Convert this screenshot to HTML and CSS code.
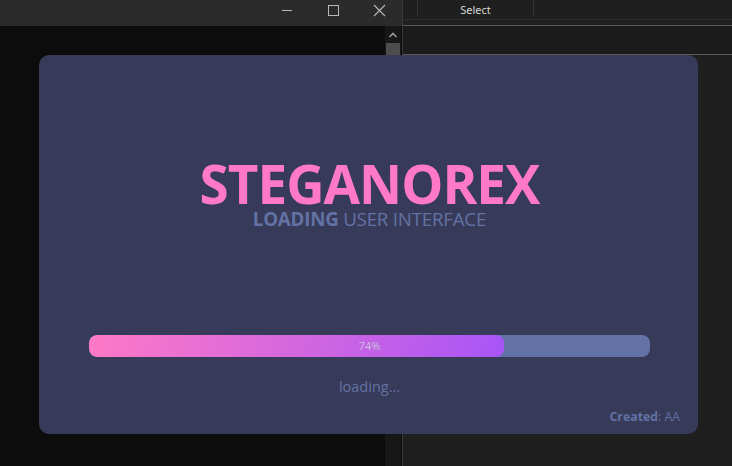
FILE: index.html
```html
<!DOCTYPE html>
<html>
<head>
<meta charset="utf-8">
<link rel="stylesheet" href="styles.css">
</head>
<body>
<div class="desk">
  <div class="win-left">
    <div class="titlebar">
      <svg class="ctl" width="46" height="26" viewBox="0 0 46 26"><path d="M18 10.5h10" stroke="#b8b8b8" stroke-width="1"/></svg>
      <svg class="ctl" width="46" height="26" viewBox="0 0 46 26"><rect x="18.5" y="5.5" width="10" height="10" fill="none" stroke="#b8b8b8" stroke-width="1"/></svg>
      <svg class="ctl" width="46" height="26" viewBox="0 0 46 26"><path d="M18 5l11 11M29 5L18 16" stroke="#b8b8b8" stroke-width="1.1"/></svg>
    </div>
    <div class="left-body">
      <div class="console"></div>
      <div class="scrollbar">
        <svg class="arrow" width="16" height="14" viewBox="0 0 16 14"><path d="M4.5 9l3.5-3.5 3.5 3.5" fill="none" stroke="#9a9a9a" stroke-width="1.6"/></svg>
        <div class="thumb"></div>
      </div>
    </div>
  </div>
  <div class="divider"></div>
  <div class="win-right">
    <div class="toolbar">
      <div class="tb-cell tb-a"></div>
      <div class="tb-cell tb-b">Select</div>
      <div class="tb-rest"></div>
    </div>
    <div class="strip"></div>
    <div class="right-body"></div>
  </div>
</div>

<div class="card">
  <div class="hero">
    <h1 class="title">STEGANOREX</h1>
    <div class="subtitle"><b>LOADING</b> USER INTERFACE</div>
  </div>
  <div class="progress">
    <div class="fill" style="width:74%"></div>
    <span class="pct">74%</span>
  </div>
  <div class="status">loading...</div>
  <div class="credit"><b>Created</b>: AA</div>
</div>
</body>
</html>
```
FILE: styles.css
```css
html, body {
  margin: 0;
  padding: 0;
  width: 732px;
  height: 466px;
  overflow: hidden;
  background: #0c0c0c;
  font-family: "Open Sans", "Noto Sans", sans-serif;
}
.desk {
  display: flex;
  width: 732px;
  height: 466px;
}
.win-left {
  width: 402px;
  display: flex;
  flex-direction: column;
}
.titlebar {
  height: 26px;
  background: #2b2b2b;
  display: flex;
  justify-content: flex-end;
  padding-right: 0;
}
.ctl { display: block; }
.left-body {
  flex: 1;
  display: flex;
}
.console {
  flex: 1;
  background: #0c0c0c;
}
.scrollbar {
  width: 16px;
  margin-right: 1px;
  background: #171717;
  display: flex;
  flex-direction: column;
  padding-top: 2px;
}
.arrow { display: block; }
.thumb {
  margin: 1px 1px 0 1px;
  height: 60px;
  background: #4d4d4d;
}
.divider {
  width: 1px;
  background: #3a3a3a;
}
.win-right {
  flex: 1;
  display: flex;
  flex-direction: column;
  background: #202020;
}
.toolbar {
  height: 19px;
  display: flex;
  background: #1f1f1f;
  border-bottom: 1px solid #2c2c2c;
}
.tb-cell {
  height: 16px;
  border-right: 1px solid #333;
}
.tb-a { width: 14px; }
.tb-b {
  width: 115px;
  color: #d8d8d8;
  font-size: 11px;
  line-height: 20px;
  text-align: center;
  font-family: "Noto Sans", sans-serif;
}
.tb-rest { flex: 1; }
.strip {
  height: 28px;
  background: #1b1b1b;
  border-top: 1px solid #5a5a5a;
  border-bottom: 1px solid #5a5a5a;
  margin-top: 5px;
}
.right-body {
  flex: 1;
  background: #1f1f1f;
}
.card {
  position: absolute;
  left: 39px;
  top: 55px;
  width: 659px;
  height: 379px;
  background: #383a59;
  border-radius: 10px;
  display: flex;
  flex-direction: column;
  align-items: center;
  box-sizing: border-box;
  padding: 0 48px 0 50px;
}
.hero {
  margin-top: 103px;
  text-align: center;
}
.title {
  margin: 0;
  font-size: 53px;
  line-height: 52px;
  font-weight: 700;
  color: #ff79c6;
  letter-spacing: -1px;
}
.subtitle {
  margin-top: 0;
  font-size: 18.7px;
  line-height: 18px;
  color: #6272a4;
  letter-spacing: -0.2px;
}
.subtitle b { font-weight: 700; }
.progress {
  margin-top: 107px;
  position: relative;
  width: 561px;
  height: 22px;
  background: #6272a4;
  border-radius: 8px;
  overflow: hidden;
}
.fill {
  height: 100%;
  border-radius: 8px;
  background: linear-gradient(100deg, #ff79c6 0%, #a855f7 100%);
}
.pct {
  position: absolute;
  left: 0;
  right: 0;
  top: 0;
  text-align: center;
  font-size: 11px;
  line-height: 22px;
  color: #c8c2dc;
}
.status {
  margin-top: 20px;
  font-size: 14.5px;
  line-height: 20px;
  color: #6272a4;
}
.credit {
  align-self: flex-end;
  margin-top: 11px;
  margin-right: -30px;
  font-size: 12.3px;
  line-height: 17px;
  color: #6272a4;
}
.credit b { font-weight: 700; }
```
